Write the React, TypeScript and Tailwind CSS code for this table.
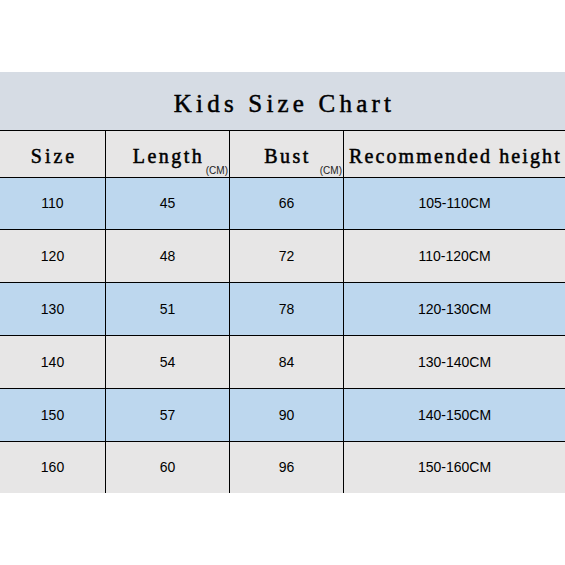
import React from "react";

const rows = [
  ["110", "45", "66", "105-110CM"],
  ["120", "48", "72", "110-120CM"],
  ["130", "51", "78", "120-130CM"],
  ["140", "54", "84", "130-140CM"],
  ["150", "57", "90", "140-150CM"],
  ["160", "60", "96", "150-160CM"],
];
const heights = ["h-[52px]", "h-[53px]", "h-[53px]", "h-[53px]", "h-[53px]", "h-[52px]"];

export default function App() {
  return (
    <div className="w-[565px] h-[565px] bg-white pt-[72px]">
      <div className="h-[58px] bg-[#d6dce4] flex items-center justify-center pt-[4px]">
        <span className="text-[25px] font-['Liberation_Serif',serif] text-black leading-none tracking-[4.2px] pl-[4px] [-webkit-text-stroke:0.5px_black]">
          Kids Size Chart
        </span>
      </div>
      <div className="grid grid-cols-[105px_124px_114px_222px] h-[47px] border-t border-black bg-[#e7e6e6] font-['Liberation_Serif',serif] text-[20px] text-black leading-none">
        <div className="flex items-center justify-center pt-[4px] tracking-[3px] pl-[3px] [-webkit-text-stroke:0.5px_black]">Size</div>
        <div className="relative flex items-center justify-center pt-[4px] border-l border-black tracking-[2.5px] pl-[2px]">
          <span className="[-webkit-text-stroke:0.5px_black]">Length</span>
          <span className="absolute right-[1px] bottom-[1px] text-[10px] tracking-normal font-['Liberation_Sans',sans-serif] text-[#222]">(CM)</span>
        </div>
        <div className="relative flex items-center justify-center pt-[4px] border-l border-black tracking-[2.5px] pl-[2px]">
          <span className="[-webkit-text-stroke:0.5px_black]">Bust</span>
          <span className="absolute right-[1px] bottom-[1px] text-[10px] tracking-normal font-['Liberation_Sans',sans-serif] text-[#222]">(CM)</span>
        </div>
        <div className="flex items-center justify-center pt-[4px] border-l border-black whitespace-nowrap tracking-[2.1px] pl-[2px] [-webkit-text-stroke:0.5px_black]">
          Recommended height
        </div>
      </div>
      {rows.map((r, i) => (
        <div
          key={i}
          className={`grid grid-cols-[105px_124px_114px_222px] ${heights[i]} border-t border-black ${i % 2 === 0 ? "bg-[#bdd7ee]" : "bg-[#e7e6e6]"} font-['Liberation_Sans',sans-serif] text-[14px] text-black`}
        >
          <div className="flex items-center justify-center">{r[0]}</div>
          <div className="flex items-center justify-center border-l border-black">{r[1]}</div>
          <div className="flex items-center justify-center border-l border-black">{r[2]}</div>
          <div className="flex items-center justify-center border-l border-black">{r[3]}</div>
        </div>
      ))}
    </div>
  );
}
